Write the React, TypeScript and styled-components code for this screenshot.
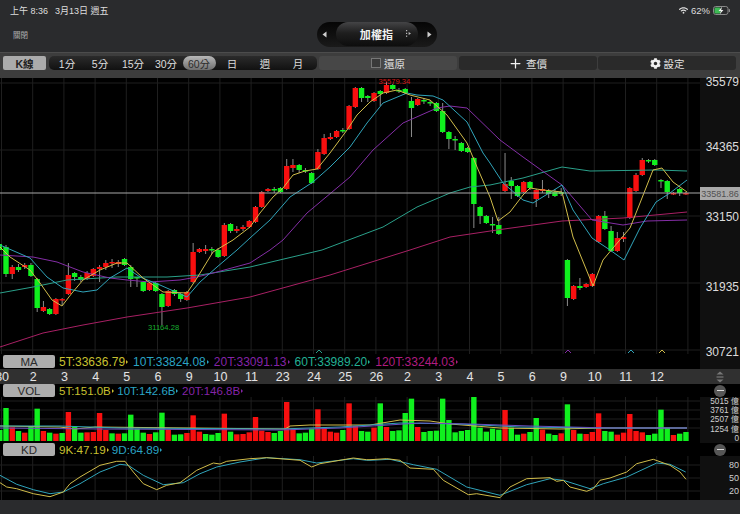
import React from "react";
import styled, { createGlobalStyle } from "styled-components";
import { FaCog, FaWifi } from "react-icons/fa";
import { Plus } from "lucide-react";

const FONT = `"Liberation Sans", "Noto Sans CJK TC", sans-serif`;
const GREEN = "#10f01e";
const RED = "#f80f0f";
const YELLOW = "#d0bc4a";
const CYAN = "#30a4ba";
const PURPLE = "#842ea6";
const TEAL = "#2aa08a";
const MAGENTA = "#a82064";

const Global = createGlobalStyle`
  html, body { margin: 0; padding: 0; background: #2a2b2d; }
  * { box-sizing: border-box; }
`;

const Page = styled.div`
  width: 740px;
  height: 514px;
  overflow: hidden;
  display: flex;
  flex-direction: column;
  background: #2a2b2d;
  font-family: ${FONT};
`;

const Header = styled.header`
  height: 52px;
  display: flex;
  flex-direction: column;
`;
const StatusBar = styled.div`
  height: 21px;
  display: flex;
  align-items: center;
  justify-content: space-between;
  padding: 0 9px 0 10px;
  font-size: 9.5px;
  color: #dedede;
`;
const StatusLeft = styled.div`
  display: flex;
  gap: 7px;
  font-size: 9px;
`;
const StatusRight = styled.div`
  display: flex;
  align-items: center;
  gap: 3px;
`;
const NavRow = styled.div`
  flex: 1;
  display: grid;
  grid-template-columns: 1fr auto 1fr;
  align-items: center;
  padding: 0 0 5px 13px;
`;
const CloseLink = styled.span`
  font-size: 7.5px;
  color: #b0b0b0;
`;
const NavPill = styled.div`
  width: 120px;
  height: 25px;
  border-radius: 13px;
  background: linear-gradient(#050505, #1a1a1a);
  display: flex;
  align-items: center;
  justify-content: space-between;
  padding: 0 5px;
`;
const NavTitle = styled.div`
  width: 82px;
  height: 24px;
  border-radius: 13px;
  background: linear-gradient(#444446 0%, #1f1f1f 45%, #0d0d0d 100%);
  color: #f2f2f2;
  font-size: 11px;
  font-weight: 700;
  position: relative;
  display: flex;
  align-items: center;
  justify-content: center;
  letter-spacing: 0.2px;
`;
const NavDots = styled.svg`
  position: absolute;
  right: 6px;
  top: 8px;
`;
const Arrow = styled.svg`
  display: block;
`;

const Toolbar = styled.nav`
  height: 26px;
  background: #3d3d3d;
  border-top: 1px solid #4c4c4c;
  display: flex;
  align-items: flex-start;
  padding: 3px 0 0 3px;
`;
const KButton = styled.div`
  width: 43px;
  height: 14px;
  margin-right: 3px;
  border-radius: 2px;
  background: #ababab;
  color: #222;
  font-size: 10.5px;
  font-weight: 700;
  display: flex;
  align-items: center;
  justify-content: center;
`;
const Segment = styled.div`
  width: 268px;
  height: 14px;
  margin-right: 2px;
  border-radius: 5px;
  padding-left: 1.5px;
  background: linear-gradient(#2b2b2b, #111);
  display: grid;
  grid-template-columns: repeat(8, 33px);
`;
const Tab = styled.div<{ $active?: boolean }>`
  height: 14px;
  border-radius: 7px;
  font-size: 10.5px;
  color: ${(p) => (p.$active ? "#2c2c2c" : "#dcdcdc")};
  background: ${(p) => (p.$active ? "linear-gradient(#b8b8b8, #6e6e6e)" : "transparent")};
  display: flex;
  align-items: center;
  justify-content: center;
`;
const ToolButton = styled.div<{ $light?: boolean; $left?: boolean }>`
  width: 138px;
  height: 14px;
  margin-right: 1.5px;
  border-radius: 3px;
  background: ${(p) => (p.$light ? "#474747" : "#2a2a2a")};
  color: #e2e2e2;
  font-size: 10.5px;
  display: flex;
  align-items: center;
  justify-content: ${(p) => (p.$left ? "flex-start" : "center")};
  gap: 3px;
  padding-left: ${(p) => (p.$left ? "52px" : "0")};
`;
const CheckBox = styled.span`
  width: 10px;
  height: 10px;
  border: 1px solid #777;
  background: #3a3a3a;
`;

const PriceBlock = styled.section`
  height: 291px;
  display: flex;
  position: relative;
  background: #000;
`;
const PlotColumn = styled.div`
  width: 700px;
  display: flex;
  flex-direction: column;
`;
const AxisColumn = styled.div`
  width: 40px;
  background: #101010;
  display: flex;
  flex-direction: column;
  align-items: flex-end;
  color: #dcdcdc;
`;
const PriceLabel = styled.div<{ $gap: number }>`
  height: 10px;
  line-height: 10px;
  margin-top: ${(p) => p.$gap}px;
  padding-right: 1px;
  font-size: 12px;
`;
const PriceTag = styled.div`
  position: absolute;
  top: 109px;
  left: 700px;
  width: 40px;
  height: 13px;
  background: #a9a9a9;
  color: #505050;
  font-size: 9px;
  display: flex;
  align-items: center;
  justify-content: center;
`;
const ChartSvg = styled.svg`
  display: block;
  background: #000;
  flex: none;
`;
const ChartText = styled.text`
  font-family: ${FONT};
  font-size: 7.6px;
`;

const LegendRow = styled.div<{ $h: number }>`
  height: ${(p) => p.$h}px;
  display: flex;
  align-items: center;
  background: #000;
  padding-left: 3px;
  flex: none;
`;
const LegendBadge = styled.div`
  width: 52px;
  height: 13px;
  margin-right: 4px;
  border-radius: 2px;
  background: #adadad;
  color: #2a2a2a;
  font-size: 11.5px;
  display: flex;
  align-items: center;
  justify-content: center;
`;
const LegendItem = styled.span<{ $color: string; $size?: number; $gap?: number }>`
  font-size: ${(p) => p.$size ?? 12}px;
  color: ${(p) => p.$color};
  margin-right: ${(p) => p.$gap ?? 5}px;
  display: flex;
  align-items: center;
  white-space: nowrap;
  &::after {
    content: "";
    margin-left: 1px;
    border-left: 2px solid ${(p) => p.$color};
    border-top: 2px solid transparent;
    border-bottom: 2px solid transparent;
  }
`;

const DateRow = styled.div`
  height: 15px;
  display: flex;
  background: #303030;
  color: #e4e4e4;
  font-size: 12.5px;
  flex: none;
`;
const DateTicks = styled.div`
  width: 700px;
  overflow: hidden;
  display: flex;
  align-items: center;
  padding-left: 0;
`;
const DateTick = styled.span<{ $first?: boolean }>`
  flex: none;
  width: 31.2px;
  text-align: center;
  margin-left: ${(p) => (p.$first ? "-13.5px" : "0")};
`;
const Spacer = styled.div`
  width: 40px;
  display: flex;
  align-items: center;
  justify-content: center;
`;

const PanelRow = styled.div`
  display: flex;
  flex: none;
  background: #000;
`;
const LegendWrap = styled.div`
  width: 700px;
`;
const MinusCell = styled.div`
  width: 40px;
  display: flex;
  align-items: center;
  justify-content: center;
`;
const MinusButton = styled.div`
  width: 12px;
  height: 12px;
  border-radius: 50%;
  background: #565656;
  display: flex;
  align-items: center;
  justify-content: center;
  &::after {
    content: "";
    width: 7px;
    height: 1.5px;
    background: #d8d8d8;
  }
`;
const SideScale = styled.div<{ $pad: number; $line: number; $size: number }>`
  width: 40px;
  background: #101010;
  color: #cfcfcf;
  font-size: ${(p) => p.$size}px;
  line-height: ${(p) => p.$line}px;
  padding: ${(p) => p.$pad}px 1px 0 0;
  text-align: right;
  white-space: nowrap;
`;
const Footer = styled.footer`
  flex: 1;
  background: #2a2b2d;
`;

type C = [number, number, number, number, "r" | "g"];
const candles: C[] = [
  [247, 274, 245, 277, "g"], [267, 274, 265, 279, "r"], [267, 270, 264, 272, "g"], [265, 267, 263, 269, "r"],
  [265, 276, 263, 277, "g"], [279, 308, 278, 312, "g"], [307, 311, 301, 312, "r"], [309, 314, 308, 315, "g"],
  [299, 314, 298, 315, "r"], [299, 300, 298, 305, "r"], [275, 294, 263, 295, "r"], [273, 277, 272, 281, "g"],
  [277, 280, 275, 282, "g"], [273, 279, 271, 280, "r"], [269, 276, 268, 277, "r"], [267, 269, 265, 282, "r"],
  [263, 267, 260, 270, "r"], [262, 263, 259, 268, "r"], [262, 264, 260, 267, "r"], [259, 265, 258, 266, "g"],
  [267, 279, 265, 287, "g"], [277, 278, 277, 287, "g"], [282, 291, 281, 292, "g"], [283, 290, 282, 291, "r"],
  [283, 291, 282, 292, "g"], [294, 307, 293, 325, "g"], [291, 306, 290, 307, "r"], [290, 294, 289, 296, "g"],
  [294, 299, 293, 302, "g"], [292, 300, 291, 301, "r"], [252, 282, 243, 283, "r"], [249, 252, 248, 253, "r"],
  [249, 251, 245, 254, "r"], [249, 250, 247, 254, "g"], [250, 257, 248, 258, "g"], [225, 256, 223, 257, "r"],
  [224, 231, 223, 233, "g"], [229, 231, 226, 233, "r"], [227, 229, 225, 231, "r"], [221, 227, 220, 228, "r"],
  [207, 222, 206, 223, "r"], [192, 207, 191, 208, "r"], [189, 191, 188, 192, "r"], [189, 190, 187, 193, "g"],
  [188, 192, 187, 193, "g"], [166, 189, 159, 190, "r"], [165, 168, 159, 172, "r"], [165, 170, 164, 173, "g"],
  [170, 171, 168, 173, "g"], [173, 183, 172, 184, "g"], [152, 169, 149, 170, "r"], [138, 154, 134, 155, "r"],
  [137, 139, 133, 140, "r"], [131, 137, 130, 138, "r"], [130, 131, 128, 133, "g"], [106, 129, 105, 130, "r"],
  [88, 107, 87, 108, "r"], [88, 98, 87, 102, "g"], [96, 98, 95, 102, "g"], [93, 101, 92, 102, "r"],
  [91, 94, 90, 106, "g"], [85, 93, 82, 94, "r"], [85, 89, 84, 90, "g"], [90, 91, 88, 93, "g"],
  [89, 93, 88, 94, "g"], [101, 108, 97, 137, "g"], [99, 105, 98, 106, "r"], [100, 101, 98, 104, "g"],
  [102, 103, 100, 106, "g"], [103, 111, 102, 112, "g"], [111, 132, 103, 133, "g"], [132, 139, 131, 149, "g"],
  [139, 140, 136, 150, "g"], [143, 151, 142, 152, "g"], [148, 152, 147, 153, "g"], [158, 204, 157, 228, "g"],
  [207, 216, 206, 224, "g"], [216, 223, 215, 224, "g"], [224, 225, 217, 233, "g"], [225, 234, 217, 235, "g"],
  [184, 191, 153, 192, "r"], [181, 186, 177, 199, "g"], [186, 196, 185, 197, "g"], [182, 192, 181, 193, "r"],
  [182, 188, 181, 190, "g"], [190, 199, 189, 207, "r"], [189, 191, 180, 193, "r"], [191, 194, 189, 198, "g"],
  [192, 196, 189, 197, "g"], [192, 194, 188, 196, "g"], [260, 298, 259, 306, "g"], [286, 299, 285, 300, "r"],
  [286, 288, 278, 290, "g"], [284, 287, 283, 288, "r"], [274, 286, 273, 287, "r"], [216, 242, 215, 243, "r"],
  [216, 229, 211, 230, "g"], [231, 251, 226, 252, "g"], [238, 251, 232, 252, "r"], [237, 239, 232, 242, "r"],
  [188, 218, 187, 219, "r"], [175, 191, 173, 192, "r"], [160, 175, 158, 176, "r"], [160, 161, 159, 163, "g"],
  [160, 165, 159, 166, "g"], [180, 181, 179, 188, "g"], [181, 192, 180, 199, "g"], [193, 194, 192, 195, "r"],
  [189, 193, 188, 196, "g"], [193, 194, 192, 195, "r"],
];

const volTops: [number, "r" | "g"][] = [
  [174, "g"], [232, "r"], [243, "g"], [248, "r"], [228, "g"], [176, "g"], [243, "r"], [248, "g"], [251, "r"], [249, "g"],
  [186, "r"], [230, "g"], [248, "g"], [247, "r"], [246, "r"], [189, "r"], [240, "r"], [250, "g"], [251, "r"], [250, "g"],
  [194, "g"], [236, "g"], [248, "g"], [252, "r"], [247, "g"], [188, "g"], [239, "r"], [254, "g"], [253, "g"], [249, "r"],
  [196, "r"], [245, "r"], [252, "g"], [254, "g"], [249, "g"], [191, "r"], [245, "g"], [253, "r"], [252, "r"], [247, "r"],
  [201, "r"], [242, "r"], [246, "r"], [249, "g"], [243, "g"], [156, "r"], [235, "r"], [250, "g"], [248, "g"], [236, "g"],
  [178, "r"], [231, "r"], [245, "r"], [248, "r"], [240, "g"], [160, "r"], [228, "r"], [243, "g"], [245, "g"], [233, "r"],
  [160, "g"], [231, "r"], [243, "g"], [241, "g"], [189, "g"], [146, "g"], [231, "r"], [246, "g"], [243, "g"], [242, "g"],
  [146, "g"], [210, "g"], [247, "g"], [243, "g"], [240, "g"], [140, "g"], [233, "g"], [245, "g"], [236, "g"], [239, "g"],
  [180, "r"], [233, "g"], [254, "g"], [251, "r"], [246, "g"], [204, "g"], [239, "r"], [251, "g"], [255, "g"], [250, "r"],
  [163, "g"], [240, "r"], [251, "g"], [252, "r"], [246, "r"], [190, "r"], [243, "g"], [245, "g"], [254, "r"], [248, "r"],
  [192, "r"], [243, "r"], [247, "r"], [255, "g"], [251, "g"], [179, "g"], [234, "g"], [255, "r"], [251, "g"], [246, "g"],
];

const barX = (i: number) => 6 + 6.238 * i;
const gridXs = Array.from({ length: 23 }, (_, k) => 1.5 + 31.2 * k);
const dates = ["30", "2", "3", "4", "5", "6", "9", "10", "11", "23", "24", "25", "26", "2", "3", "4", "5", "6", "9", "10", "11", "12"];

const ma5 = "0,247 10,257 30,270 40,283 52,300 62,306 72,293 83,280 100,270 117,263 127,263 143,278 163,292 187,293 197,278 213,252 233,240 250,227 260,213 273,197 283,188 293,175 305,171 317,169 330,153 347,130 357,115 370,102 383,93 397,90 410,95 430,100 447,115 467,143 477,167 490,197 498,221 510,212 523,195 530,188 543,190 562,192 573,237 593,286 603,260 613,248 630,228 640,203 653,170 662,168 673,182 687,192";
const ma10 = "0,245 30,258 47,277 63,288 83,292 97,290 110,278 127,268 140,277 160,285 187,297 200,282 217,267 237,250 250,238 270,220 290,197 313,182 330,167 350,147 367,123 383,103 407,93 417,95 433,96 443,100 467,122 483,153 490,163 503,183 523,200 533,203 562,185 573,210 592,238 610,250 624,260 640,228 656,202 670,193 687,180";
const ma20 = "0,255 33,257 57,262 83,272 110,278 127,280 150,282 180,280 197,277 217,272 250,263 270,250 283,240 307,213 350,177 373,150 403,123 437,108 450,106 467,108 500,140 523,157 562,185 592,220 623,225 647,221 687,220";
const ma60 = "0,293 33,287 67,280 117,277 167,277 200,275 250,267 322,250 383,227 417,207 450,193 470,187 490,185 523,178 562,167 590,171 657,170 687,171";
const ma120 = "0,347 43,333 83,325 127,317 187,308 250,297 330,275 410,250 450,237 477,233 497,230 562,221 623,218 687,212";

const volY = "0,426 60,427 75,429 95,427 285,429 290,426 310,425 370,425 400,420 430,421 450,424 500,428 560,429 600,428 687,428";
const volC = "0,426 60,426 120,428 280,429 340,427 400,423 460,424 520,427 600,428 687,428";
const volP = "0,428 100,429 280,430 340,428 420,423 470,424 530,426 610,428 687,428";

const zoomed = (raw: string, ox: number, oy: number) =>
  raw.split(" ").map((p) => {
    const [x, y] = p.split(",").map(Number);
    return `${(ox + x / 3).toFixed(1)},${(oy + y / 3).toFixed(1)}`;
  }).join(" ");

const kdK =
  zoomed("0,392 20,405 50,410 100,425 150,434 190,420 210,395 240,375 300,340 350,328 375,328 400,360 430,395 470,413 500,400 540,392 590,355 640,333 660,336 680,328 750,320 800,317 900,325 935,345 960,335 1060,318 1100,323", 0, 350) +
  " " +
  zoomed("0,323 50,320 90,325 120,348 190,352 220,385 295,428 320,425 390,437 420,405 470,380 540,377 560,388 580,385 600,405 650,418 670,410 690,385 720,378 770,360 800,335 850,322 900,340 930,360 948,382", 370, 350);
const kdD =
  zoomed("0,370 50,397 100,413 150,425 190,420 240,395 300,360 360,337 385,340 430,370 490,398 550,392 600,365 650,345 720,330 800,317 900,323 950,333 1060,320 1100,325", 0, 350) +
  " " +
  zoomed("0,325 60,322 130,338 200,352 290,405 390,430 470,398 540,380 580,385 660,410 700,395 770,375 860,333 900,337 947,360", 370, 350);

const Grid = ({ y0, y1, rows }: { y0: number; y1: number; rows: number[] }) => (
  <g stroke="#1f1f1f" strokeWidth={1}>
    {gridXs.map((x) => <line key={x} x1={x} x2={x} y1={y0} y2={y1} />)}
    {rows.map((y) => <line key={y} x1={0} x2={700} y1={y} y2={y} />)}
  </g>
);

const Line = ({ pts, color }: { pts: string; color: string }) => (
  <polyline points={pts} fill="none" stroke={color} strokeWidth={1} strokeLinejoin="round" />
);

const Caret = ({ x, y, color }: { x: number; y: number; color: string }) => (
  <polyline points={`${x - 3},${y + 2} ${x},${y - 1} ${x + 3},${y + 2}`} fill="none" stroke={color} strokeWidth={1} />
);

const PriceChart = () => (
  <ChartSvg width={700} height={276} viewBox="0 78 700 276">
    <Grid y0={78} y1={354} rows={[83, 150, 216, 283, 350]} />
    <rect x={-2} y={244} width={4} height={6} fill={GREEN} />
    <g stroke="#8c8c8c" strokeWidth={1}>
      {candles.map((c, i) => <line key={i} x1={barX(i)} x2={barX(i)} y1={c[2]} y2={c[3]} />)}
    </g>
    {candles.map((c, i) => (
      <rect key={i} x={barX(i) - 2.7} y={c[0]} width={5.4} height={Math.max(c[1] - c[0], 1.5)} fill={c[4] === "r" ? RED : GREEN} />
    ))}
    <Line pts={ma120} color={MAGENTA} />
    <Line pts={ma60} color={TEAL} />
    <Line pts={ma20} color={PURPLE} />
    <Line pts={ma10} color={CYAN} />
    <Line pts={ma5} color={YELLOW} />
    <line x1={0} x2={700} y1={193} y2={193} stroke="#a8a8a8" strokeWidth={1} />
    <ChartText x={378.5} y={84} fill="#d01a1a">35579.34</ChartText>
    <ChartText x={148} y={330} fill="#18b030">31164.28</ChartText>
    <Caret x={319} y={351} color={TEAL} />
    <Caret x={568} y={351} color={PURPLE} />
    <Caret x={631} y={351} color={CYAN} />
    <Caret x={662} y={351} color={YELLOW} />
  </ChartSvg>
);

const VolChart = () => (
  <ChartSvg width={700} height={44} viewBox="0 397 700 44">
    <Grid y0={397} y1={441} rows={[401, 410, 419, 428]} />
    <rect x={-2} y={430} width={4.5} height={11} fill={GREEN} />
    {volTops.map(([t, c], i) => {
      const top = 350 + t / 3;
      return <rect key={i} x={barX(i) - 2.7} y={top} width={5.4} height={441 - top} fill={c === "r" ? RED : GREEN} />;
    })}
    <Line pts={volY} color={YELLOW} />
    <Line pts={volC} color={CYAN} />
    <Line pts={volP} color="#6a4fc0" />
  </ChartSvg>
);

const KdChart = () => (
  <ChartSvg width={700} height={44} viewBox="0 454 700 44">
    <Grid y0={454} y1={498} rows={[463, 476, 489]} />
    <Line pts={kdD} color={CYAN} />
    <Line pts={kdK} color={YELLOW} />
  </ChartSvg>
);

const Battery = () => (
  <svg width={18} height={9} viewBox="0 0 18 9">
    <rect x={0.5} y={0.5} width={14.5} height={8} rx={2.2} fill="none" stroke="#8a8a8a" />
    <rect x={1.5} y={1.5} width={6} height={6} rx={1.2} fill="#3ebb55" />
    <rect x={15.8} y={3} width={1.2} height={3} rx={0.6} fill="#8a8a8a" />
    <path d="M9 0.8 L5.6 5 H7.8 L6.8 8.2 L10.4 3.9 H8.2 Z" fill="#f4f4f4" />
  </svg>
);

const SideArrow = ({ left }: { left?: boolean }) => (
  <Arrow width={5} height={7} viewBox="0 0 5 7">
    <path d={left ? "M4.5 0.5 V6.5 L0.5 3.5 Z" : "M0.5 0.5 V6.5 L4.5 3.5 Z"} fill="#cfcfcf" />
  </Arrow>
);

export default function App() {
  return (
    <Page>
      <Global />
      <Header>
        <StatusBar>
          <StatusLeft>
            <span>上午 8:36</span>
            <span>3月13日 週五</span>
          </StatusLeft>
          <StatusRight>
            <FaWifi size={9} color="#e0e0e0" />
            <span>62%</span>
            <Battery />
          </StatusRight>
        </StatusBar>
        <NavRow>
          <CloseLink>關閉</CloseLink>
          <NavPill>
            <SideArrow left />
            <NavTitle>
              加權指
              <NavDots width={6} height={7} viewBox="0 0 6 7">
                <g fill="#bdbdbd">
                  <rect x={0} y={0} width={1.2} height={1.2} />
                  <rect x={0} y={2.8} width={1.2} height={1.2} />
                  <rect x={0} y={5.6} width={1.2} height={1.2} />
                  <path d="M2.6 2 V5 L5 3.5 Z" />
                </g>
              </NavDots>
            </NavTitle>
            <SideArrow />
          </NavPill>
          <span />
        </NavRow>
      </Header>

      <Toolbar>
        <KButton>K線</KButton>
        <Segment>
          {["1分", "5分", "15分", "30分", "60分", "日", "週", "月"].map((t) => (
            <Tab key={t} $active={t === "60分"}>{t}</Tab>
          ))}
        </Segment>
        <ToolButton $light $left>
          <CheckBox />
          還原
        </ToolButton>
        <ToolButton>
          <Plus size={15} strokeWidth={2} color="#f2f2f2" />
          查價
        </ToolButton>
        <ToolButton>
          <FaCog size={11} color="#f0f0f0" />
          設定
        </ToolButton>
      </Toolbar>

      <PriceBlock>
        <PlotColumn>
          <PriceChart />
          <LegendRow $h={15}>
            <LegendBadge>MA</LegendBadge>
            <LegendItem $color="#c8c030">5T:33636.79</LegendItem>
            <LegendItem $color="#2aa4c4">10T:33824.08</LegendItem>
            <LegendItem $color="#8424a8">20T:33091.13</LegendItem>
            <LegendItem $color="#22b094">60T:33989.20</LegendItem>
            <LegendItem $color="#b01c80">120T:33244.03</LegendItem>
          </LegendRow>
        </PlotColumn>
        <AxisColumn>
          <PriceLabel $gap={-1}>35579</PriceLabel>
          <PriceLabel $gap={55}>34365</PriceLabel>
          <PriceLabel $gap={60}>33150</PriceLabel>
          <PriceLabel $gap={60}>31935</PriceLabel>
          <PriceLabel $gap={55}>30721</PriceLabel>
        </AxisColumn>
        <PriceTag>33581.86</PriceTag>
      </PriceBlock>

      <DateRow>
        <DateTicks>
          {dates.map((d, i) => (
            <DateTick key={i} $first={i === 0}>{d}</DateTick>
          ))}
        </DateTicks>
        <Spacer>
          <svg width={8} height={12} viewBox="0 0 8 12">
            <path d="M4 0.5 L7.5 3.5 H0.5 Z M0.5 8.5 H7.5 L4 11.5 Z" fill="#777" />
            <rect x={0.5} y={5.4} width={7} height={1.2} fill="#777" />
          </svg>
        </Spacer>
      </DateRow>

      <PanelRow>
        <LegendWrap>
          <LegendRow $h={13}>
            <LegendBadge>VOL</LegendBadge>
            <LegendItem $color="#c8c030" $size={11.5} $gap={3.5}>5T:151.0B</LegendItem>
            <LegendItem $color="#2aa4c4" $size={11.5} $gap={3.5}>10T:142.6B</LegendItem>
            <LegendItem $color="#8424a8" $size={11.5} $gap={3.5}>20T:146.8B</LegendItem>
          </LegendRow>
        </LegendWrap>
        <MinusCell><MinusButton /></MinusCell>
      </PanelRow>
      <PanelRow>
        <VolChart />
        <SideScale $pad={0} $line={9.2} $size={8.2}>
          5015 億<br />3761 億<br />2507 億<br />1254 億<br />0
        </SideScale>
      </PanelRow>

      <PanelRow>
        <LegendWrap>
          <LegendRow $h={13}>
            <LegendBadge>KD</LegendBadge>
            <LegendItem $color="#c8c030" $size={11.7} $gap={3}>9K:47.19</LegendItem>
            <LegendItem $color="#2aa4c4" $size={11.7} $gap={3}>9D:64.89</LegendItem>
          </LegendRow>
        </LegendWrap>
        <MinusCell><MinusButton /></MinusCell>
      </PanelRow>
      <PanelRow>
        <KdChart />
        <SideScale $pad={3} $line={13} $size={9}>
          80<br />50<br />20
        </SideScale>
      </PanelRow>

      <Footer />
    </Page>
  );
}
